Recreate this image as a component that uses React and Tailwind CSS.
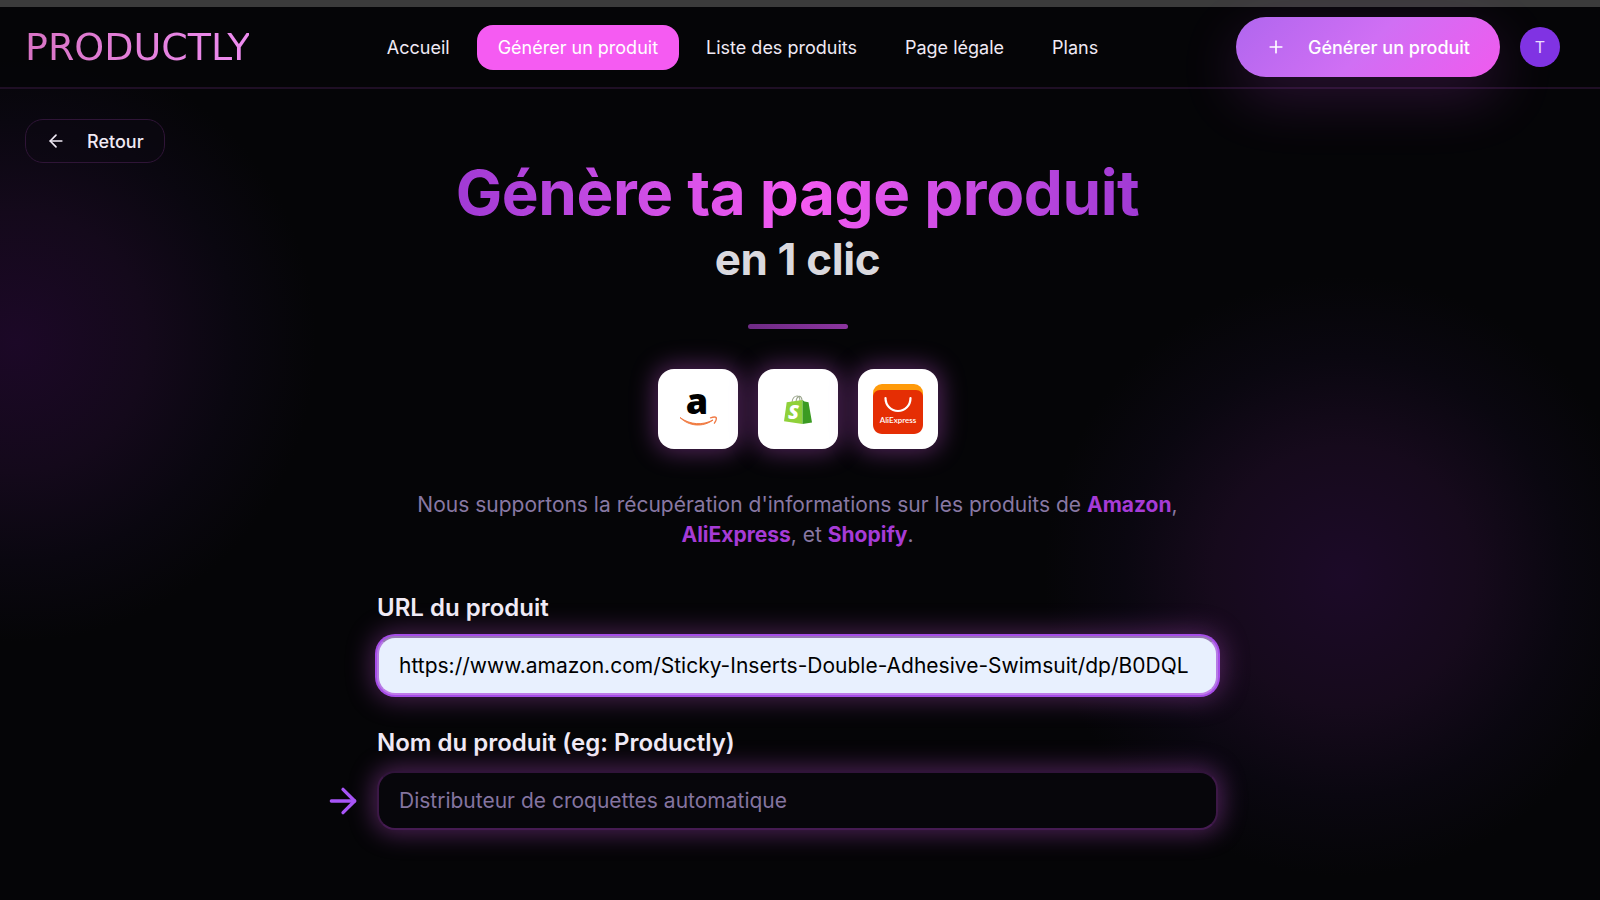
import { useState } from 'react'
import { ArrowLeft, ArrowRight, Plus } from 'lucide-react'

const links = [
  { label: 'Accueil' },
  { label: 'Générer un produit', active: true },
  { label: 'Liste des produits' },
  { label: 'Page légale' },
  { label: 'Plans' }
]

const inputBase =
  'block w-full h-[59px] px-5 rounded-[18px] border-2 text-[21px] outline-none'

function AmazonLogo() {
  return (
    <svg width="70" height="70" viewBox="-15 -15 70 70" role="img" aria-label="Amazon">
      <text x="19" y="25" textAnchor="middle" fontSize="36" className="font-['Open_Sans'] font-extrabold fill-black">
        a
      </text>
      <path d="M2 28.500c10 7.500 23 8 33 2.500-10 7.500-24 6.500-33-2.500z" fill="#f58536" stroke="#f07a45" strokeWidth="1" strokeLinejoin="round" />
      <path d="M32.500 28.800c2.500-.8 5-.9 5.700-.3.500 1.500-.4 3.800-1.800 5.700" fill="none" stroke="#f07a45" strokeWidth="1.300" strokeLinecap="round" strokeLinejoin="round" />
    </svg>
  )
}

function ShopifyLogo() {
  return (
    <svg width="40" height="40" viewBox="1 0 40 40" role="img" aria-label="Shopify">
      <path d="M15 13c.6-4 3-6.200 5.300-6 1.800.2 2.600 2.300 2.700 5M19 12.500c.5-3.400 2-5.300 3.800-5.100 1.500.3 2 2 2.300 4.300" fill="none" stroke="#9aa58c" strokeWidth="1.100" />
      <path d="M9.700 13.300 25.500 11 25.500 35 7 32.300z" fill="#8fd13a" />
      <path d="M25.500 11l2 1.400 4 .8 3.500 20.300-9.500 1.500z" fill="#3b9b22" />
      <text x="16.500" y="30" textAnchor="middle" fontSize="20" className="font-['Open_Sans'] font-extrabold italic fill-white">
        S
      </text>
    </svg>
  )
}

function AliExpressLogo() {
  return (
    <svg width="50" height="50" viewBox="0 0 50 50" role="img" aria-label="AliExpress">
      <rect width="50" height="30" rx="9" fill="#ff9a0a" />
      <path d="M0 13c0-4 3-7 7-7h36c4 0 7 3 7 7v28c0 5-4 9-9 9H9c-5 0-9-4-9-9z" fill="#e52e04" />
      <path d="M12.500 14c0 7.500 5.500 13 12.500 13s12.500-5.500 12.500-13" fill="none" stroke="#fff" strokeWidth="2.200" strokeLinecap="round" />
      <text x="25" y="38.500" textAnchor="middle" fontSize="8" className="font-['Lato'] font-semibold fill-white">
        AliExpress
      </text>
    </svg>
  )
}

const shops = [
  { name: 'amazon', Logo: AmazonLogo },
  { name: 'shopify', Logo: ShopifyLogo },
  { name: 'aliexpress', Logo: AliExpressLogo }
]

export default function App() {
  const [url, setUrl] = useState('https://www.amazon.com/Sticky-Inserts-Double-Adhesive-Swimsuit/dp/B0DQL')
  const [name, setName] = useState('')

  return (
    <div className="min-h-screen bg-[#050507] bg-[radial-gradient(circle_at_1%_38%,#1c0827_0,#14091b_130px,#0a0710_220px,transparent_300px),radial-gradient(circle_at_84%_64%,#1c0a28_0,#160a1c_130px,#0a0710_220px,transparent_300px)] font-['Inter',sans-serif] text-[#f0eaf5]">
      <div className="h-[7px] bg-[#3b3b3b]" />

      {/* Navbar */}
      <header className="h-[82px] flex items-center justify-between pl-[25px] pr-10 bg-[#050507]/80 border-b-2 border-[#1f0f25]">
        <a
          href="#"
          className="w-56 text-[38px] leading-10 font-['DejaVu_Sans',sans-serif] bg-gradient-to-r from-[#d873c4] to-[#ee8cf0] bg-clip-text text-transparent"
        >
          PRODUCTLY
        </a>

        <nav className="flex items-center gap-1.5">
          {links.map(link => (
            <a
              key={link.label}
              href="#"
              className={`h-[45px] flex items-center px-[21px] rounded-2xl text-[18px] whitespace-nowrap transition ${
                link.active ? 'bg-[#f55bf2] text-white' : 'hover:text-white'
              }`}
            >
              {link.label}
            </a>
          ))}
        </nav>

        <div className="flex items-center gap-5">
          <button className="h-[60px] flex items-center gap-[22px] px-[30px] rounded-full bg-[linear-gradient(135deg,#b066ee,#d06ff4_50%,#f05aee)] text-white text-[18px] font-medium whitespace-nowrap shadow-[0_20px_60px_rgba(200,70,230,0.2)]">
            <Plus size={20} strokeWidth={2} />
            Générer un produit
          </button>
          <button className="w-10 h-10 rounded-full bg-[#8033e3] text-[16px] text-[#eadcff]">T</button>
        </div>
      </header>

      <main className="pt-[30px] pl-[25px] pr-[30px] pb-10">
        <button className="h-11 flex items-center gap-[21px] px-5 rounded-[18px] border border-[#2f1537] bg-[#0b0811]/50 text-[18px] font-medium">
          <ArrowLeft size={20} strokeWidth={2} />
          Retour
        </button>

        <div className="max-w-[841px] mx-auto">
          {/* Title */}
          <h1 className="text-center font-bold tracking-tight">
            <span className="block w-fit mx-auto pb-1.5 text-[62px] leading-[60px] bg-gradient-to-r from-[#a03ad4] via-[#f55bf2] to-[#a03ad4] bg-clip-text text-transparent">
              Génère ta page produit
            </span>
            <span className="block text-[44px] leading-[60px] text-[#dad9de]">en 1 clic</span>
          </h1>
          <div className="w-[100px] h-[5px] mt-[35px] mx-auto rounded-full bg-gradient-to-r from-[#6f2b85] to-[#8c359f]" />

          {/* Supported shops */}
          <div className="flex justify-center gap-5 mt-10">
            {shops.map(({ name, Logo }) => (
              <div
                key={name}
                className="w-20 h-20 flex items-center justify-center rounded-2xl bg-white shadow-[0_0_24px_3px_rgba(190,80,210,0.42)]"
              >
                <Logo />
              </div>
            ))}
          </div>

          <p className="mt-[41px] px-5 text-center text-[21px] leading-[30px] text-[#8878a3]">
            Nous supportons la récupération d'informations sur les produits de{' '}
            <strong className="font-bold text-[#a63bd6]">Amazon</strong>,{' '}
            <strong className="font-bold text-[#a63bd6]">AliExpress</strong>, et{' '}
            <strong className="font-bold text-[#a63bd6]">Shopify</strong>.
          </p>

          {/* Form */}
          <form className="mt-11" onSubmit={e => e.preventDefault()}>
            <label htmlFor="url" className="block text-[24px] leading-7 font-semibold">
              URL du produit
            </label>
            <input
              id="url"
              type="text"
              value={url}
              onChange={e => setUrl(e.target.value)}
              className={`${inputBase} mt-3.5 bg-[#e8f0fe] text-black border-t-[#9879b5] border-x-[#b67be4] border-b-[#bf7be9] shadow-[0_0_0_2px_#a64de8,0_0_26px_5px_rgba(190,80,210,0.36)]`}
            />

            <label htmlFor="name" className="block mt-8.5 text-[24px] leading-7 font-semibold">
              Nom du produit (eg: Productly)
            </label>
            <div className="flex items-center gap-3.5 mt-3.5 -ml-[54px]">
              <ArrowRight size={40} strokeWidth={2} className="shrink-0 text-[#a855f7]" />
              <input
                id="name"
                type="text"
                placeholder="Distributeur de croquettes automatique"
                value={name}
                onChange={e => setName(e.target.value)}
                className={`${inputBase} bg-[#07060b] placeholder:text-[#8474a0] border-t-[#30143a] border-x-[#3c1846] border-b-[#451b52] shadow-[0_0_24px_4px_rgba(190,80,210,0.38)]`}
              />
            </div>
          </form>
        </div>
      </main>
    </div>
  )
}
